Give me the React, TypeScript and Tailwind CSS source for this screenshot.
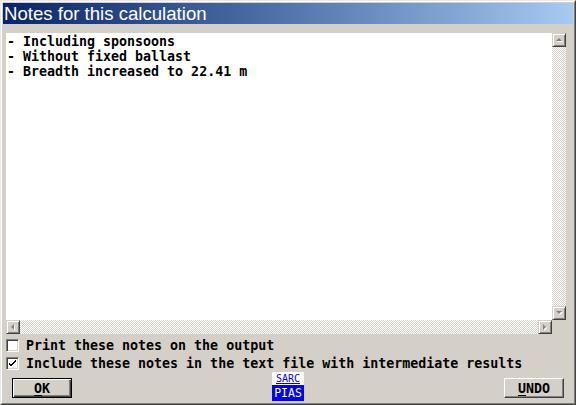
import React from "react";

const mono = { fontFamily: '"DejaVu Sans Mono", "Liberation Mono", monospace' };

function Arrow({ dir }: { dir: "up" | "down" | "left" | "right" }) {
  const pts: Record<string, string> = {
    up: "1,5 7,5 4,2",
    down: "1,2 7,2 4,5",
    left: "5,1 5,7 2,4",
    right: "2,1 2,7 5,4",
  };
  return (
    <svg width="8" height="8" viewBox="0 0 8 8">
      <polygon points={pts[dir]} fill="#ffffff" transform="translate(1,1)" />
      <polygon points={pts[dir]} fill="#808080" />
    </svg>
  );
}

function ScrollBtn({ dir }: { dir: "up" | "down" | "left" | "right" }) {
  return (
    <div className="w-[14px] h-[14px] shrink-0 bg-[#d4d0c8] border border-t-[#d4d0c8] border-l-[#d4d0c8] border-r-[#404040] border-b-[#404040] shadow-[inset_1px_1px_0_#ffffff,inset_-1px_-1px_0_#808080] flex items-center justify-center">
      <Arrow dir={dir} />
    </div>
  );
}

const track =
  "bg-[repeating-conic-gradient(#d4d0c8_0_25%,#ffffff_0_50%)] bg-[length:2px_2px]";

function Checkbox({ checked, label }: { checked: boolean; label: string }) {
  return (
    <div className="flex items-center h-[18px]">
      <div className="w-[13px] h-[13px] bg-white border border-t-[#808080] border-l-[#808080] border-r-white border-b-white shadow-[inset_1px_1px_0_#404040,inset_-1px_-1px_0_#d4d0c8] flex items-center justify-center">
        {checked && (
          <svg width="7" height="7" viewBox="0 0 7 7">
            <path d="M0 3 L2 5 L7 0 M0 4 L2 6 L7 1" stroke="#000" strokeWidth="1" fill="none" />
          </svg>
        )}
      </div>
      <span className="ml-[7px] text-[13.3px] font-bold text-black leading-[15px] whitespace-pre" style={mono}>
        {label}
      </span>
    </div>
  );
}

export default function App() {
  return (
    <div className="w-[576px] h-[405px] bg-[#d4d0c8] border border-t-[#e8e8e8] border-l-[#e8e8e8] border-r-[#404040] border-b-[#404040] overflow-hidden">
      <div className="w-full h-full border border-t-[#ffffff] border-l-[#ffffff] border-r-[#808080] border-b-[#808080] p-px flex flex-col">
        <div className="h-[21px] shrink-0 bg-gradient-to-r from-[#0a246a] to-[#a6caf0] flex items-center pl-[1px]">
          <span className="text-white text-[18.6px] leading-[21px]" style={{ fontFamily: '"Liberation Sans", Arial, sans-serif' }}>
            Notes for this calculation
          </span>
        </div>

        <div className="mt-[9px] ml-[3px] w-[560px] flex flex-col">
          <div className="flex h-[287px]">
            <div className="w-[546px] h-full bg-white pt-[1px] pl-[1px]">
              <div className="text-[13.3px] font-bold leading-[15px] text-black whitespace-pre" style={mono}>
                {"- Including sponsoons\n- Without fixed ballast\n- Breadth increased to 22.41 m"}
              </div>
            </div>
            <div className="w-[14px] h-full flex flex-col">
              <ScrollBtn dir="up" />
              <div className={`flex-1 ${track}`} />
              <ScrollBtn dir="down" />
            </div>
          </div>
          <div className="flex h-[14px]">
            <div className="w-[546px] flex">
              <ScrollBtn dir="left" />
              <div className={`flex-1 ${track}`} />
              <ScrollBtn dir="right" />
            </div>
          </div>
        </div>

        <div className="mt-[2px] ml-[3px] flex flex-col">
          <Checkbox checked={false} label="Print these notes on the output" />
          <Checkbox checked={true} label="Include these notes in the text file with intermediate results" />
        </div>

        <div className="flex items-start h-[29px] ml-[9px] mr-[9px]">
          <div className="mt-[6px] w-[60px] h-[20px] border border-black shadow-[inset_1px_1px_0_#ffffff,inset_-1px_-1px_0_#404040,inset_-2px_-2px_0_#808080] flex items-center justify-center">
            <span className="text-[13.3px] font-bold leading-[15px] text-black" style={mono}>
              <span className="underline underline-offset-2">O</span>K
            </span>
          </div>
          <div className="flex-1 flex justify-center">
            <div className="w-[32px] flex flex-col">
              <div className="h-[13px] bg-white flex items-center justify-center">
                <span className="text-[10px] leading-[11px] text-[#0000ff] underline" style={mono}>SARC</span>
              </div>
              <div className="h-[16px] bg-[#0000ff] flex items-center justify-center">
                <span className="text-[11.5px] leading-[12px] text-white" style={mono}>PIAS</span>
              </div>
            </div>
          </div>
          <div className="mt-[6px] w-[60px] h-[20px] border border-t-white border-l-white border-r-[#404040] border-b-[#404040] shadow-[inset_-1px_-1px_0_#808080] flex items-center justify-center">
            <span className="text-[13.3px] font-bold leading-[15px] text-black" style={mono}>
              <span className="underline underline-offset-2">U</span>NDO
            </span>
          </div>
        </div>
      </div>
    </div>
  );
}
